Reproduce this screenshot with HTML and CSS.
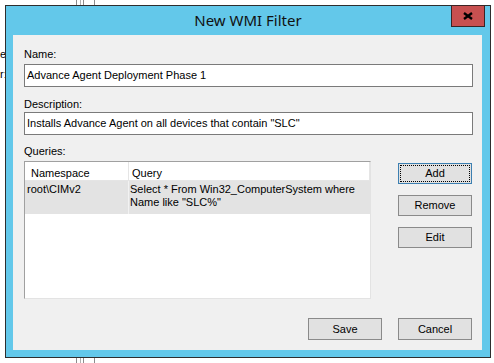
FILE: index.html
```html
<!DOCTYPE html>
<html>
<head>
<meta charset="utf-8">
<title>New WMI Filter</title>
<link rel="stylesheet" href="styles.css">
</head>
<body>
<div class="bg-lines top"><i></i><i></i><i></i><i></i></div>
<div class="bg-lines bottom"><i></i><i></i><i></i><i></i></div>
<div class="bg-text t1">er</div>
<div class="bg-text t2">r:</div>
<div class="window">
  <div class="titlebar">
    <span class="title">New WMI Filter</span>
    <button class="close" type="button" aria-label="Close">
      <svg width="10" height="8" viewBox="0 0 10 8"><path d="M1 1 L9 7 M9 1 L1 7" stroke="#000" stroke-width="2.3" fill="none"/></svg>
    </button>
  </div>
  <div class="client">
    <div class="lbl lbl-name">Name:</div>
    <div class="input">Advance Agent Deployment Phase 1</div>
    <div class="lbl lbl-desc">Description:</div>
    <div class="input">Installs Advance Agent on all devices that contain "SLC"</div>
    <div class="lbl lbl-q">Queries:</div>
    <div class="mid">
      <div class="list">
        <div class="lhead">
          <div class="h1">Namespace</div>
          <div class="h2">Query</div>
        </div>
        <div class="lrow">
          <div class="r1">root\CIMv2</div>
          <div class="r2">Select * From Win32_ComputerSystem where<br>Name like "SLC%"</div>
        </div>
      </div>
      <div class="side">
        <button class="btn default" type="button">Add</button>
        <button class="btn" type="button">Remove</button>
        <button class="btn" type="button">Edit</button>
      </div>
    </div>
    <div class="foot">
      <button class="btn" type="button">Save</button>
      <button class="btn" type="button">Cancel</button>
    </div>
  </div>
</div>
</body>
</html>
```

FILE: styles.css
```css
html, body {
  margin: 0;
  padding: 0;
}
body {
  width: 494px;
  height: 363px;
  overflow: hidden;
  position: relative;
  background: #ffffff;
  font-family: "Liberation Sans", Arial, sans-serif;
  font-size: 11px;
  color: #000;
}

/* desktop items behind the dialog */
.bg-lines {
  position: absolute;
  left: 76px;
  width: 20px;
  height: 5px;
}
.bg-lines.top { top: 0; }
.bg-lines.bottom { top: 358px; }
.bg-lines i {
  position: absolute;
  top: 0;
  width: 1px;
  height: 5px;
  background: #8c8c8c;
}
.bg-lines i:nth-child(1) { left: 0; }
.bg-lines i:nth-child(2) { left: 4px; background: #b0b0b0; }
.bg-lines i:nth-child(3) { left: 7px; }
.bg-lines i:nth-child(4) { left: 18px; }
.bg-text {
  position: absolute;
  left: 0;
  font-size: 11px;
  line-height: 13px;
  color: #000;
}
.bg-text.t1 { top: 48px; }
.bg-text.t2 { top: 68px; }

/* window */
.window {
  position: absolute;
  left: 5px;
  top: 5px;
  width: 486px;
  height: 353px;
  box-sizing: border-box;
  border: 1px solid #2e2e2e;
  background: #63c8ea;
  display: flex;
  flex-direction: column;
}
.titlebar {
  position: relative;
  height: 29px;
  flex: none;
  display: flex;
  justify-content: center;
}
.title {
  font-family: "Noto Sans", "Open Sans", sans-serif;
  font-size: 15px;
  line-height: 29px;
  color: #111;
}
.close {
  position: absolute;
  top: -1px;
  right: 5px;
  width: 34px;
  height: 22px;
  box-sizing: border-box;
  margin: 0;
  padding: 0;
  border: 1px solid #3b2424;
  background: #c75050;
  display: flex;
  align-items: center;
  justify-content: center;
}
.close svg { display: block; }

.client {
  margin: 0 8px 0 7px;
  height: 315px;
  box-sizing: border-box;
  background: #f0f0f0;
  padding: 13px 0 0 11px;
}
.lbl {
  line-height: 13px;
  height: 13px;
}
.lbl-name { margin-bottom: 3px; }
.lbl-desc { margin-top: 11px; margin-bottom: 1px; }
.lbl-q { margin-top: 10px; margin-bottom: 3px; }

.input {
  width: 449px;
  height: 23px;
  box-sizing: border-box;
  border: 1px solid #7a7a7a;
  background: #fff;
  padding-left: 2px;
  line-height: 21px;
  white-space: nowrap;
}

.mid {
  display: flex;
  align-items: flex-start;
}
.list {
  width: 347px;
  height: 138px;
  box-sizing: border-box;
  border: 1px solid;
  border-color: #a0a0a0 #e3e3e3 #e3e3e3 #a0a0a0;
  background: #fff;
}
.lhead {
  display: flex;
  height: 19px;
  box-sizing: border-box;
  border-bottom: 1px solid #e5e5e5;
}
.h1, .h2 {
  box-sizing: border-box;
  border-right: 1px solid #e5e5e5;
  padding-top: 5px;
  line-height: 13px;
}
.h1 { width: 104px; padding-left: 6px; }
.h2 { width: 241px; padding-left: 3px; }

.lrow {
  display: flex;
  height: 33px;
  background: #e3e3e3;
}
.r1, .r2 {
  box-sizing: border-box;
  padding-top: 2px;
  line-height: 13px;
  white-space: nowrap;
}
.r1 { width: 104px; padding-left: 2px; border-right: 1px solid #f2f2f2; }
.r2 { width: 241px; padding-left: 1px; }

.side {
  margin-left: 27px;
  padding-top: 2px;
  display: flex;
  flex-direction: column;
  gap: 11px;
}
.btn {
  width: 74px;
  height: 21px;
  box-sizing: border-box;
  margin: 0;
  padding: 0;
  border: 1px solid #8a8a8a;
  background: #e1e1e1;
  font-family: "Liberation Sans", Arial, sans-serif;
  font-size: 11px;
  color: #000;
  line-height: 19px;
  text-align: center;
}
.btn.default {
  border-color: #3c7fb1;
  outline: 1px dotted #000;
  outline-offset: -3px;
}
.foot {
  display: flex;
  justify-content: flex-end;
  gap: 16px;
  margin-top: 19px;
  margin-right: 10px;
}
.foot .btn { height: 22px; line-height: 20px; }
```
